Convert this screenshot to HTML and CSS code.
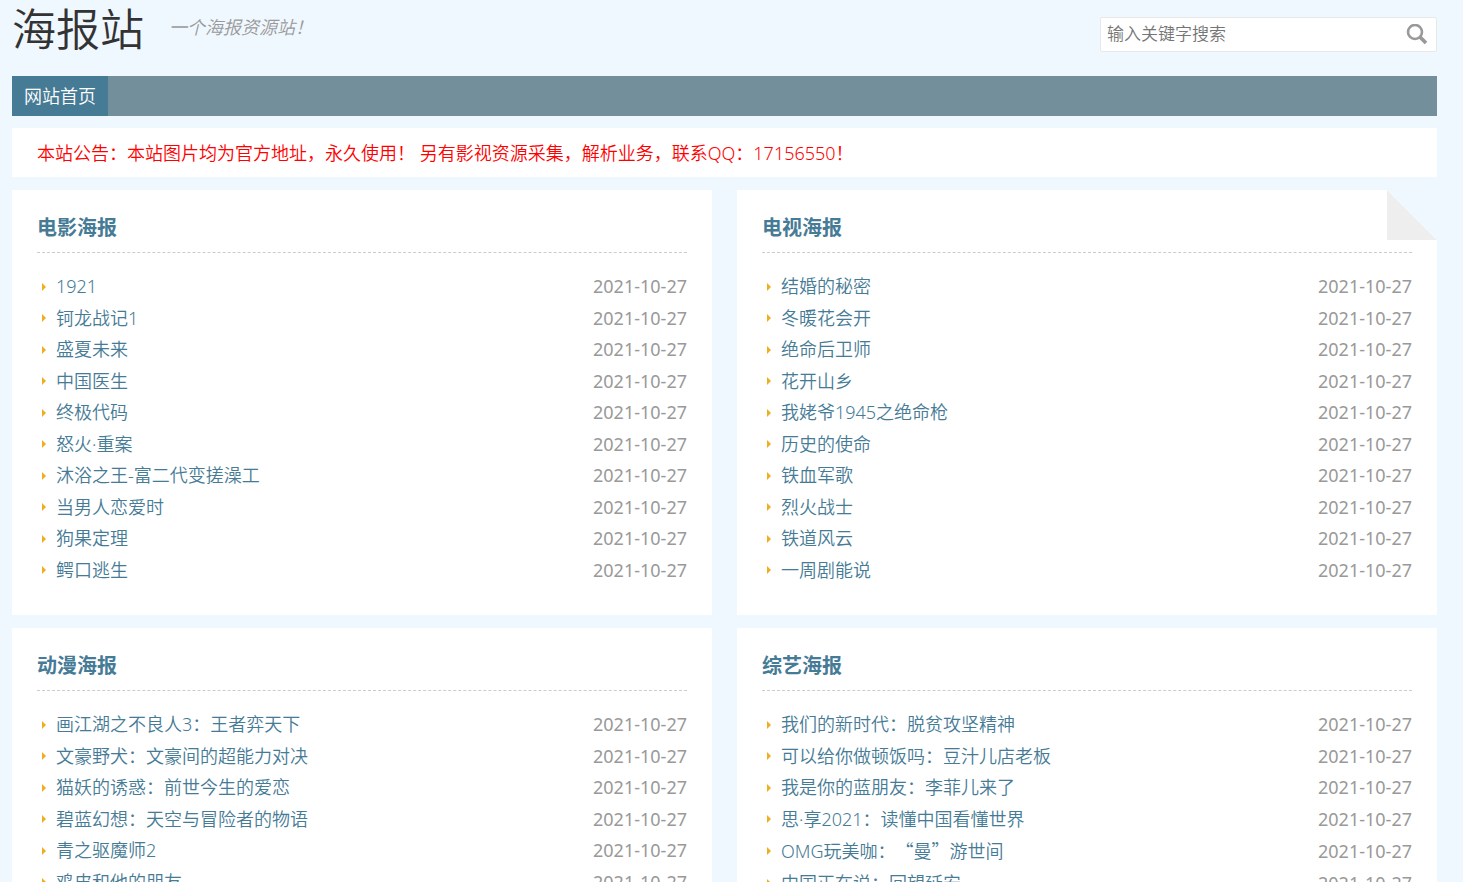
FILE: index.html
```
<!DOCTYPE html>
<html lang="zh-CN">
<head>
<meta charset="utf-8">
<meta name="viewport" content="width=device-width, initial-scale=1">
<title>海报站</title>
<link rel="stylesheet" href="styles.css">
</head>
<body>
<div class="page">
  <header class="header">
    <h1 class="site-name">海报站</h1>
    <p class="tagline">一个海报资源站！</p>
    <form class="search" role="search">
      <input class="search-input" type="text" placeholder="输入关键字搜索" aria-label="输入关键字搜索">
      <button class="search-button" type="submit" aria-label="搜索">
        <svg width="22" height="22" viewBox="0 0 22 22" fill="none" stroke="#999">
          <circle cx="9" cy="8" r="7" stroke-width="2.6"/>
          <path d="M14 13L20 19" stroke-width="3.8"/>
        </svg>
      </button>
    </form>
  </header>
  <nav class="nav"><a class="nav-link" href="#">网站首页</a></nav>
  <p class="notice">本站公告：本站图片均为官方地址，永久使用！ 另有影视资源采集，解析业务，联系QQ：17156550！</p>
  <main class="grid">
    <section class="card">
      <h2 class="card-title">电影海报</h2>
      <ul class="list">
        <li class="item"><a class="link" href="#">1921</a><span class="date">2021-10-27</span></li>
        <li class="item"><a class="link" href="#">钶龙战记1</a><span class="date">2021-10-27</span></li>
        <li class="item"><a class="link" href="#">盛夏未来</a><span class="date">2021-10-27</span></li>
        <li class="item"><a class="link" href="#">中国医生</a><span class="date">2021-10-27</span></li>
        <li class="item"><a class="link" href="#">终极代码</a><span class="date">2021-10-27</span></li>
        <li class="item"><a class="link" href="#">怒火·重案</a><span class="date">2021-10-27</span></li>
        <li class="item"><a class="link" href="#">沐浴之王-富二代变搓澡工</a><span class="date">2021-10-27</span></li>
        <li class="item"><a class="link" href="#">当男人恋爱时</a><span class="date">2021-10-27</span></li>
        <li class="item"><a class="link" href="#">狗果定理</a><span class="date">2021-10-27</span></li>
        <li class="item"><a class="link" href="#">鳄口逃生</a><span class="date">2021-10-27</span></li>
      </ul>
    </section>
    <section class="card card-folded">
      <h2 class="card-title">电视海报</h2>
      <ul class="list">
        <li class="item"><a class="link" href="#">结婚的秘密</a><span class="date">2021-10-27</span></li>
        <li class="item"><a class="link" href="#">冬暖花会开</a><span class="date">2021-10-27</span></li>
        <li class="item"><a class="link" href="#">绝命后卫师</a><span class="date">2021-10-27</span></li>
        <li class="item"><a class="link" href="#">花开山乡</a><span class="date">2021-10-27</span></li>
        <li class="item"><a class="link" href="#">我姥爷1945之绝命枪</a><span class="date">2021-10-27</span></li>
        <li class="item"><a class="link" href="#">历史的使命</a><span class="date">2021-10-27</span></li>
        <li class="item"><a class="link" href="#">铁血军歌</a><span class="date">2021-10-27</span></li>
        <li class="item"><a class="link" href="#">烈火战士</a><span class="date">2021-10-27</span></li>
        <li class="item"><a class="link" href="#">铁道风云</a><span class="date">2021-10-27</span></li>
        <li class="item"><a class="link" href="#">一周剧能说</a><span class="date">2021-10-27</span></li>
      </ul>
    </section>
    <section class="card">
      <h2 class="card-title">动漫海报</h2>
      <ul class="list">
        <li class="item"><a class="link" href="#">画江湖之不良人3：王者弈天下</a><span class="date">2021-10-27</span></li>
        <li class="item"><a class="link" href="#">文豪野犬：文豪间的超能力对决</a><span class="date">2021-10-27</span></li>
        <li class="item"><a class="link" href="#">猫妖的诱惑：前世今生的爱恋</a><span class="date">2021-10-27</span></li>
        <li class="item"><a class="link" href="#">碧蓝幻想：天空与冒险者的物语</a><span class="date">2021-10-27</span></li>
        <li class="item"><a class="link" href="#">青之驱魔师2</a><span class="date">2021-10-27</span></li>
        <li class="item"><a class="link" href="#">鸡皮和他的朋友</a><span class="date">2021-10-27</span></li>
      </ul>
    </section>
    <section class="card">
      <h2 class="card-title">综艺海报</h2>
      <ul class="list">
        <li class="item"><a class="link" href="#">我们的新时代：脱贫攻坚精神</a><span class="date">2021-10-27</span></li>
        <li class="item"><a class="link" href="#">可以给你做顿饭吗：豆汁儿店老板</a><span class="date">2021-10-27</span></li>
        <li class="item"><a class="link" href="#">我是你的蓝朋友：李菲儿来了</a><span class="date">2021-10-27</span></li>
        <li class="item"><a class="link" href="#">思·享2021：读懂中国看懂世界</a><span class="date">2021-10-27</span></li>
        <li class="item"><a class="link" href="#">OMG玩美咖：<span class="cjk">“曼”</span>游世间</a><span class="date">2021-10-27</span></li>
        <li class="item"><a class="link" href="#">中国正在说：回望延安</a><span class="date">2021-10-27</span></li>
      </ul>
    </section>
  </main>
</div>
</body>
</html>
```
FILE: styles.css
```
* { box-sizing: border-box; }
body {
  margin: 0;
  background: #f0f8ff;
  color: #333;
  font: 350 18px/1.75 "Noto Sans", "Noto Sans CJK SC", sans-serif;
  text-spacing-trim: space-all;
}
h1, h2, p, ul { margin: 0; padding: 0; }
a { color: #467b96; text-decoration: none; }
.page { padding: 0 26px 0 12px; }
.header { display: flex; align-items: flex-start; height: 76px; }
.site-name { font-size: 44px; font-weight: 350; line-height: 58px; }
.tagline { margin: 12px 0 0 25px; color: #999; font-style: italic; }
.search {
  display: flex;
  align-items: center;
  width: 337px;
  height: 35px;
  margin: 17px 0 0 auto;
  border: 1px solid #e8e8e8;
  border-radius: 2px;
  background: #fff;
}
.search-input {
  flex: 1;
  min-width: 0;
  height: 33px;
  padding: 0 6px 3px;
  border: 0;
  outline: 0;
  background: none;
  color: #333;
  font: inherit;
  font-size: 17px;
}
.search-input::placeholder { color: #757575; }
.search-button { display: flex; padding: 0 8px; border: 0; background: none; cursor: pointer; }
.nav { display: flex; background: #728f9b; }
.nav-link { padding: 0 12px; background: #467b96; color: #fff; line-height: 40px; }
.notice { margin: 12px 0 13px; padding: 1px 25px 0; background: #fff; color: #f00; line-height: 48px; }
.grid { display: grid; grid-template-columns: 1fr 1fr; gap: 13px 25px; }
.card { position: relative; padding: 14px 25px 29px; background: #fff; }
.card-folded::after {
  content: "";
  position: absolute;
  top: 0;
  right: 0;
  width: 50px;
  height: 50px;
  background: linear-gradient(45deg, #eee 50%, #f0f8ff 50%);
}
.card-title {
  border-bottom: 1px dashed #ccc;
  color: #467b96;
  font-size: 20px;
  font-weight: 700;
  line-height: 48px;
}
.list { margin-top: 18px; list-style: none; }
.item { display: flex; align-items: center; }
.item::before {
  content: "";
  margin: 0 10px 0 5px;
  border: 4px solid transparent;
  border-right: 0;
  border-left: 4px solid #f0ad1e;
}
.date { margin-left: auto; color: #999; font-weight: 400; }
.cjk { font-family: "Noto Sans CJK SC", sans-serif; }
```
